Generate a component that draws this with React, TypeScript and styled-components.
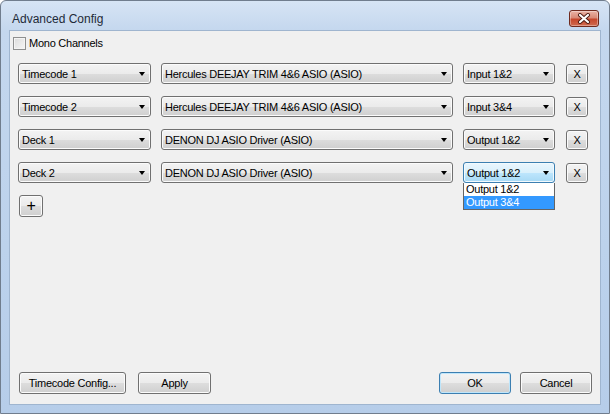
import React from 'react';
import styled, { createGlobalStyle, css } from 'styled-components';

const GlobalStyle = createGlobalStyle`
  html, body {
    margin: 0;
    padding: 0;
    background: #ffffff;
  }
  body {
    font-family: "Liberation Sans", Arial, sans-serif;
    font-size: 11px;
    letter-spacing: -0.25px;
    color: #000;
  }
`;

const Window = styled.div`
  width: 610px;
  height: 414px;
  box-sizing: border-box;
  display: flex;
  flex-flow: column;
  padding: 0 8px 8px 8px;
  border: 1px solid #707d8d;
  border-radius: 6px 6px 0 0;
  background: linear-gradient(180deg, #d6e4f4 0%, #c4d7ee 30px, #bcd2ec 60%, #b6cde9 100%);
`;

const TitleBar = styled.div`
  height: 29px;
  box-sizing: border-box;
  padding-top: 6px;
  display: flex;
  align-items: center;
  justify-content: space-between;
`;

const Title = styled.span`
  padding-left: 3px;
  font-size: 12px;
  letter-spacing: 0;
  color: #1e2a38;
`;

const CloseButton = styled.div`
  width: 30px;
  height: 17px;
  box-sizing: border-box;
  margin-right: 2px;
  border: 1px solid #6f2a1e;
  border-radius: 3px;
  display: flex;
  align-items: center;
  justify-content: center;
  background: linear-gradient(180deg, #eab3a5 0%, #d98a77 45%, #c6472c 55%, #cf6a4f 100%);
  box-shadow: inset 0 0 0 1px rgba(255, 255, 255, 0.35);
`;

const Client = styled.div`
  flex: 1;
  display: flex;
  flex-flow: column;
  background: #f0f0f0;
  border: 1px solid #9fb5cf;
`;

const CheckRow = styled.label`
  display: flex;
  align-items: center;
  gap: 3px;
  margin: 5px 0 0 3px;
  height: 14px;
`;

const CheckBox = styled.span`
  width: 13px;
  height: 13px;
  box-sizing: border-box;
  border: 1px solid #8e8f8f;
  background: linear-gradient(135deg, #dcdcdc 0%, #f6f6f6 100%);
  box-shadow: inset 0 0 0 1px #f4f4f4;
`;

const Rows = styled.div`
  display: flex;
  flex-flow: column;
  gap: 12px;
  margin: 13px 0 0 8px;
`;

const Row = styled.div`
  display: flex;
  align-items: flex-start;
`;

const gloss = css`
  border: 1px solid #707070;
  border-radius: 3px;
  box-sizing: border-box;
  background: linear-gradient(180deg, #f3f3f3 0%, #ebebeb 50%, #dddddd 51%, #cfcfcf 100%);
  box-shadow: inset 0 0 0 1px #fbfbfb;
`;

const ComboWrap = styled.div<{ $width: number; $gap: number }>`
  position: relative;
  width: ${(p) => p.$width}px;
  margin-right: ${(p) => p.$gap}px;
`;

const Combo = styled.div<{ $active?: boolean }>`
  ${gloss}
  height: 21px;
  display: flex;
  align-items: center;
  justify-content: space-between;
  padding: 0 5px 0 3px;
  white-space: nowrap;
  ${(p) =>
    p.$active &&
    css`
      border-color: #3c7fb1;
      background: linear-gradient(180deg, #eaf6fd 0%, #d9f0fc 50%, #bee6fd 51%, #a7d9f5 100%);
      box-shadow: inset 0 0 0 1px #f2fafe;
    `}
`;

const Arrow = styled.span`
  width: 0;
  height: 0;
  border-left: 3.5px solid transparent;
  border-right: 3.5px solid transparent;
  border-top: 4px solid #000;
  margin-top: 1px;
`;

const DropList = styled.div`
  position: absolute;
  top: 100%;
  left: 0;
  right: 0;
  background: #fff;
  border: 1px solid #646464;
  border-top: none;
  display: flex;
  flex-flow: column;
`;

const DropItem = styled.div<{ $selected?: boolean }>`
  height: 13px;
  line-height: 13px;
  padding-left: 2px;
  background: ${(p) => (p.$selected ? '#3399ff' : '#fff')};
  color: ${(p) => (p.$selected ? '#fff' : '#000')};
`;

const Button = styled.div<{ $width: number; $default?: boolean }>`
  ${gloss}
  width: ${(p) => p.$width}px;
  height: 22px;
  display: flex;
  align-items: center;
  justify-content: center;
  ${(p) =>
    p.$default &&
    css`
      border-color: #3c7fb1;
      box-shadow: inset 0 0 0 1px #bfe6fb;
    `}
`;

const RemoveButton = styled(Button)`
  height: 20px;
  margin-top: 1px;
`;

const AddButton = styled(Button)`
  margin: 12px 0 0 9px;
  font-size: 16px;
  line-height: 1;
`;

const Footer = styled.div`
  margin-top: auto;
  display: flex;
  align-items: center;
  padding: 0 8px 10px 9px;
`;

const FooterLeft = styled.div`
  display: flex;
  gap: 12px;
`;

const FooterRight = styled.div`
  display: flex;
  gap: 9px;
  margin-left: auto;
`;

interface Channel {
  name: string;
  device: string;
  port: string;
  open?: boolean;
}

const channels: Channel[] = [
  { name: 'Timecode 1', device: 'Hercules DEEJAY TRIM 4&6 ASIO (ASIO)', port: 'Input 1&2' },
  { name: 'Timecode 2', device: 'Hercules DEEJAY TRIM 4&6 ASIO (ASIO)', port: 'Input 3&4' },
  { name: 'Deck 1', device: 'DENON DJ ASIO Driver (ASIO)', port: 'Output 1&2' },
  { name: 'Deck 2', device: 'DENON DJ ASIO Driver (ASIO)', port: 'Output 1&2', open: true },
];

const CloseGlyph = () => (
  <svg width="14" height="11" viewBox="0 0 14 11">
    <path d="M3 2 L11 9 M11 2 L3 9" stroke="#4a1a12" strokeWidth="4" strokeLinecap="round" />
    <path d="M3 2 L11 9 M11 2 L3 9" stroke="#ffffff" strokeWidth="2.2" strokeLinecap="round" />
  </svg>
);

const App = () => {
  return (
    <>
      <GlobalStyle />
      <Window>
        <TitleBar>
          <Title>Advanced Config</Title>
          <CloseButton>
            <CloseGlyph />
          </CloseButton>
        </TitleBar>
        <Client>
          <CheckRow>
            <CheckBox />
            <span>Mono Channels</span>
          </CheckRow>
          <Rows>
            {channels.map((c) => (
              <Row key={c.name}>
                <ComboWrap $width={133} $gap={10}>
                  <Combo>
                    <span>{c.name}</span>
                    <Arrow />
                  </Combo>
                </ComboWrap>
                <ComboWrap $width={292} $gap={10}>
                  <Combo>
                    <span>{c.device}</span>
                    <Arrow />
                  </Combo>
                </ComboWrap>
                <ComboWrap $width={92} $gap={11}>
                  <Combo $active={c.open}>
                    <span>{c.port}</span>
                    <Arrow />
                  </Combo>
                  {c.open && (
                    <DropList>
                      <DropItem>Output 1&amp;2</DropItem>
                      <DropItem $selected>Output 3&amp;4</DropItem>
                    </DropList>
                  )}
                </ComboWrap>
                <RemoveButton $width={22}>X</RemoveButton>
              </Row>
            ))}
          </Rows>
          <AddButton $width={24}>+</AddButton>
          <Footer>
            <FooterLeft>
              <Button $width={107}>Timecode Config...</Button>
              <Button $width={73}>Apply</Button>
            </FooterLeft>
            <FooterRight>
              <Button $width={72} $default>
                OK
              </Button>
              <Button $width={72}>Cancel</Button>
            </FooterRight>
          </Footer>
        </Client>
      </Window>
    </>
  );
};

export default App;
